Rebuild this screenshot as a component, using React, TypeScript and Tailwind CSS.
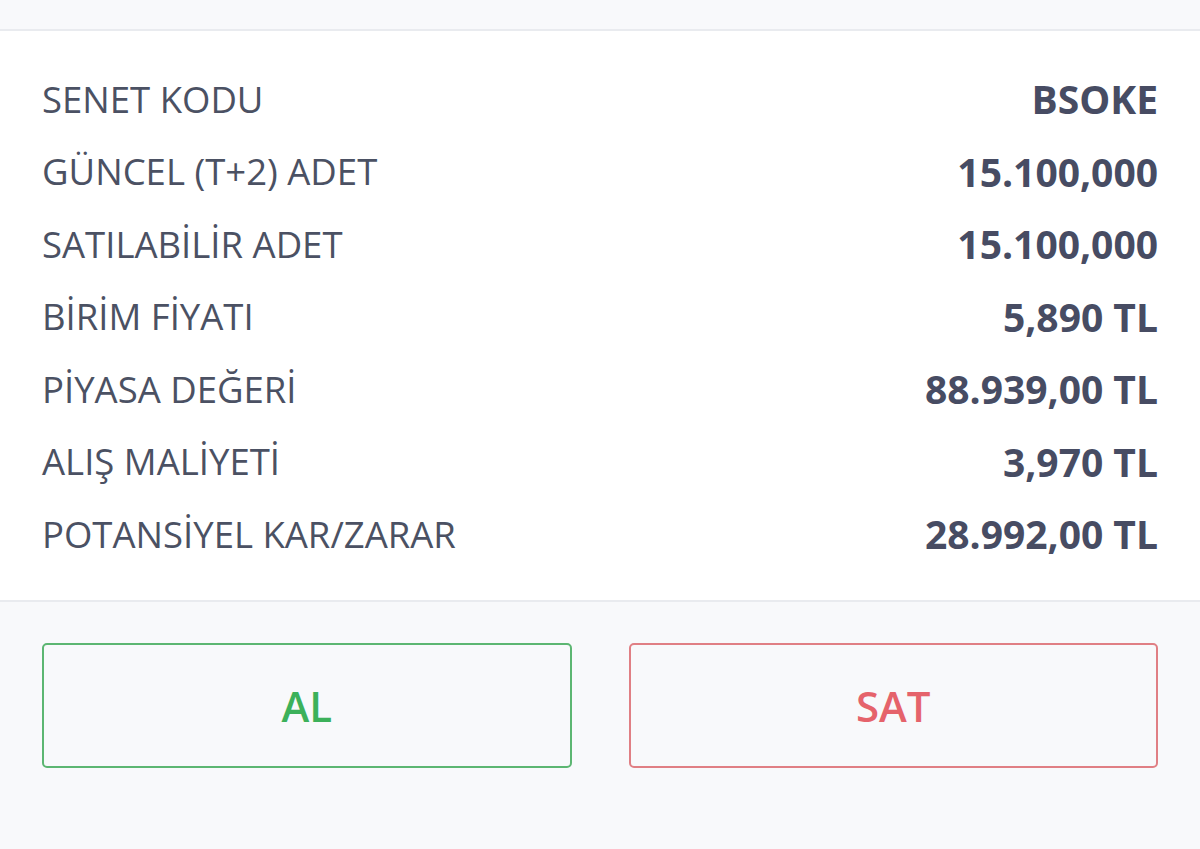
const rows: [string, string][] = [
  ['SENET KODU', 'BSOKE'],
  ['GÜNCEL (T+2) ADET', '15.100,000'],
  ['SATILABİLİR ADET', '15.100,000'],
  ['BİRİM FİYATI', '5,890 TL'],
  ['PİYASA DEĞERİ', '88.939,00 TL'],
  ['ALIŞ MALİYETİ', '3,970 TL'],
  ['POTANSİYEL KAR/ZARAR', '28.992,00 TL'],
];

export default function App() {
  return (
    <div
      className="w-[1200px] h-[849px] bg-[#f8f9fb] flex flex-col overflow-hidden"
      style={{ fontFamily: '"Open Sans", "Noto Sans", sans-serif' }}
    >
      <div className="h-[29px] shrink-0" />

      {/* detay listesi */}
      <div className="bg-white border-y-2 border-[#e9ebef] px-[42px] pt-[32px] pb-[29px] flex flex-col">
        {rows.map(([label, value]) => (
          <div key={label} className="h-[72.5px] flex items-center justify-between">
            <span className="text-[36.5px] text-[#4b5163]">{label}</span>
            <span className="text-[39px] font-bold text-[#474c63]">{value}</span>
          </div>
        ))}
      </div>

      {/* al / sat butonları */}
      <div className="flex gap-[57px] px-[42px] pt-[41px]">
        <button className="flex-1 h-[125px] rounded-[5px] border-2 border-[#5cb672] text-[#3cb15a] text-[42px] font-semibold flex items-center justify-center">
          AL
        </button>
        <button className="flex-1 h-[125px] rounded-[5px] border-2 border-[#e07f84] text-[#e5636b] text-[42px] font-semibold flex items-center justify-center">
          SAT
        </button>
      </div>
    </div>
  );
}
